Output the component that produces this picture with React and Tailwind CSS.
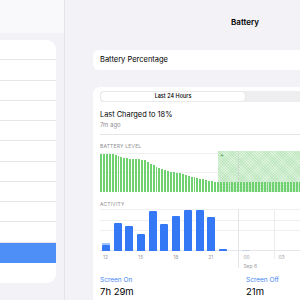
import React from "react";

const font = { fontFamily: "Inter, 'Noto Sans', sans-serif" };

function batteryHeight(x) {
  const pts = [
    [100, 38], [113, 38], [118, 36], [123, 34], [133, 33], [143, 32], [150, 28], [157, 24],
    [167, 21], [177, 19], [188, 16], [200, 13], [210, 11], [216, 9.5], [400, 9.5],
  ];
  for (let i = 0; i < pts.length - 1; i++) {
    const [x0, y0] = pts[i];
    const [x1, y1] = pts[i + 1];
    if (x >= x0 && x <= x1) {
      return y0 + ((y1 - y0) * (x - x0)) / (x1 - x0);
    }
  }
  return 9.5;
}

const batteryBars = Array.from({ length: 96 }, (_, i) => Math.round(batteryHeight(100 + i * 2.917)));

const activity = [
  { h: 6, light: 2 },
  { h: 28 },
  { h: 25 },
  { h: 17 },
  { h: 40 },
  { h: 27 },
  { h: 35 },
  { h: 41 },
  { h: 41 },
  { h: 34 },
  { h: 2 },
  { h: 0 },
  { h: 1, grey: true },
  { h: 0 },
  { h: 0 },
  { h: 0 },
  { h: 0 },
  { h: 0 },
  { h: 0 },
  { h: 0 },
  { h: 0 },
  { h: 0 },
  { h: 0 },
  { h: 0 },
];

const hours = ["12", "15", "18", "21", "00", "03"];

const hatch = {
  backgroundImage:
    "repeating-linear-gradient(45deg, rgba(140,210,140,0.25) 0px, rgba(140,210,140,0.25) 1px, transparent 1px, transparent 2px), repeating-linear-gradient(-45deg, rgba(140,210,140,0.2) 0px, rgba(140,210,140,0.2) 1px, transparent 1px, transparent 2px)",
};

export default function App() {
  const rows = Array.from({ length: 12 }, (_, i) => i);
  return (
    <div className="w-[300px] h-[300px] overflow-hidden flex items-start bg-[#f2f2f7]" style={font}>
      {/* Sidebar */}
      <div className="w-[65px] h-[300px] shrink-0 border-r border-[#e4e4e8] bg-[#f2f2f7]">
        <div className="h-[33px] bg-[#f9f9fb]" />
        <div className="pt-[7px] pr-[8px]">
          <div className="bg-white rounded-r-[9px] overflow-hidden">
            {rows.map((i) => (
              <div
                key={i}
                className={
                  i === 10
                    ? "h-[20.25px] bg-[#4e8ef7]"
                    : i === 11
                    ? "h-[20.25px]"
                    : "h-[20.25px] border-b border-[#e6e6ea]"
                }
              />
            ))}
          </div>
        </div>
      </div>

      {/* Main */}
      <div className="w-[360px] shrink-0 px-[28px]">
        <div className="h-[44px] flex items-center justify-center">
          <span className="text-[8px] font-semibold text-black">Battery</span>
        </div>
        <div className="mt-[6px] h-[20px] bg-white rounded-[6px] flex items-center px-[7px]">
          <span className="text-[7.5px] text-black">Battery Percentage</span>
        </div>

        <div className="mt-[17px] bg-white rounded-[7px] px-[7px] pt-[4px] h-[240px]">
          {/* Segmented control */}
          <div className="h-[11px] bg-[#eeeef0] rounded-[3px] p-[1px] flex">
            <div className="flex-1 bg-white rounded-[3px] shadow-[0_0_1px_rgba(0,0,0,0.2)] flex items-center justify-center">
              <span className="text-[5.5px] font-medium text-black">Last 24 Hours</span>
            </div>
            <div className="flex-1" />
          </div>

          <div className="mt-[8px] text-[7.4px] leading-[10px] text-black">Last Charged to 18%</div>
          <div className="mt-[1px] text-[6px] leading-[8px] text-[#8e8e93]">7m ago</div>
          <div className="mt-[5px] border-t border-[#e5e5ea]" />

          <div className="mt-[8px] text-[5px] leading-[6px] tracking-[0.2px] text-[#8e8e93]">BATTERY LEVEL</div>

          {/* Battery chart */}
          <div className="relative mt-[2px] h-[41px] w-[280px]">
            {/* horizontal grid */}
            <div className="absolute inset-0 flex flex-col pt-[2px]">
              <div className="h-[19px] border-t border-[#efeff2]" />
              <div className="h-[19px] border-t border-[#efeff2]" />
            </div>
            {/* charging zone */}
            <div className="absolute inset-0 flex">
              <div className="w-[118px] shrink-0" />
              <div className="flex-1 bg-[#dff4df] pl-[2px] text-[6px] leading-[7px] text-[#3d8f3d]" style={hatch}>
                +
              </div>
            </div>
            {/* vertical grid */}
            <div className="absolute inset-0 flex pl-[138px]">
              <div className="w-[118px] border-l border-dotted border-[#c9c9ce]" />
              <div className="border-l border-dotted border-[#c9c9ce]" />
            </div>
            {/* bars */}
            <div className="absolute inset-0 flex items-end gap-[1px]">
              {batteryBars.map((h, i) => (
                <div key={i} className="flex-1 bg-[#6fd16f]" style={{ height: h }} />
              ))}
            </div>
          </div>

          <div className="mt-[9px] text-[5px] leading-[6px] tracking-[0.2px] text-[#8e8e93]">ACTIVITY</div>

          {/* Activity chart */}
          <div className="relative mt-[2px] w-[280px] h-[62px]">
            {/* horizontal grid */}
            <div className="absolute inset-x-0 top-0 h-[42px] flex flex-col">
              <div className="h-[11px] border-t border-[#f0f0f3]" />
              <div className="h-[10px] border-t border-[#f0f0f3]" />
              <div className="h-[21px] border-t border-[#f0f0f3] border-b border-b-[#e5e5ea]" />
            </div>
            {/* vertical grid */}
            <div className="absolute inset-0 flex items-start pl-[138px]">
              <div className="w-[36px] h-[59px] border-l border-[#e3e3e8]" />
              <div className="w-[36px] h-[50px] border-l border-[#ececf0]" />
              <div className="w-[35px] h-[50px] border-l border-[#ececf0]" />
              <div className="h-[50px] border-l border-[#ececf0]" />
            </div>
            {/* bars */}
            <div className="absolute inset-x-0 top-0 h-[42px] flex items-end gap-[3.7px] pl-[2px]">
              {activity.map((b, i) => (
                <div key={i} className="w-[8px] flex flex-col justify-end">
                  {b.light ? <div className="bg-[#9fc2fa]" style={{ height: b.light }} /> : null}
                  <div
                    className={b.grey ? "bg-[#c3d3ea] rounded-t-[1px]" : "bg-[#3478f6] rounded-t-[1px]"}
                    style={{ height: b.h }}
                  />
                </div>
              ))}
            </div>
            {/* axis labels */}
            <div className="absolute inset-x-0 top-[45px] flex pl-[3px] text-[5px] leading-[6px] text-[#a1a1a6]">
              {hours.map((t) => (
                <div key={t} className="w-[35.1px] shrink-0 flex flex-col gap-[3px]">
                  <span>{t}</span>
                  {t === "00" ? <span>Sep 6</span> : null}
                </div>
              ))}
            </div>
          </div>

          <div className="mt-[5px] flex">
            <div className="w-[146px]">
              <div className="text-[6.5px] leading-[8px] text-[#3f86f5]">Screen On</div>
              <div className="mt-[2px] text-[9.5px] leading-[11px] text-black">7h 29m</div>
            </div>
            <div>
              <div className="text-[6.5px] leading-[8px] text-[#3f86f5]">Screen Off</div>
              <div className="mt-[2px] text-[9.5px] leading-[11px] text-black">21m</div>
            </div>
          </div>
        </div>
      </div>
    </div>
  );
}
